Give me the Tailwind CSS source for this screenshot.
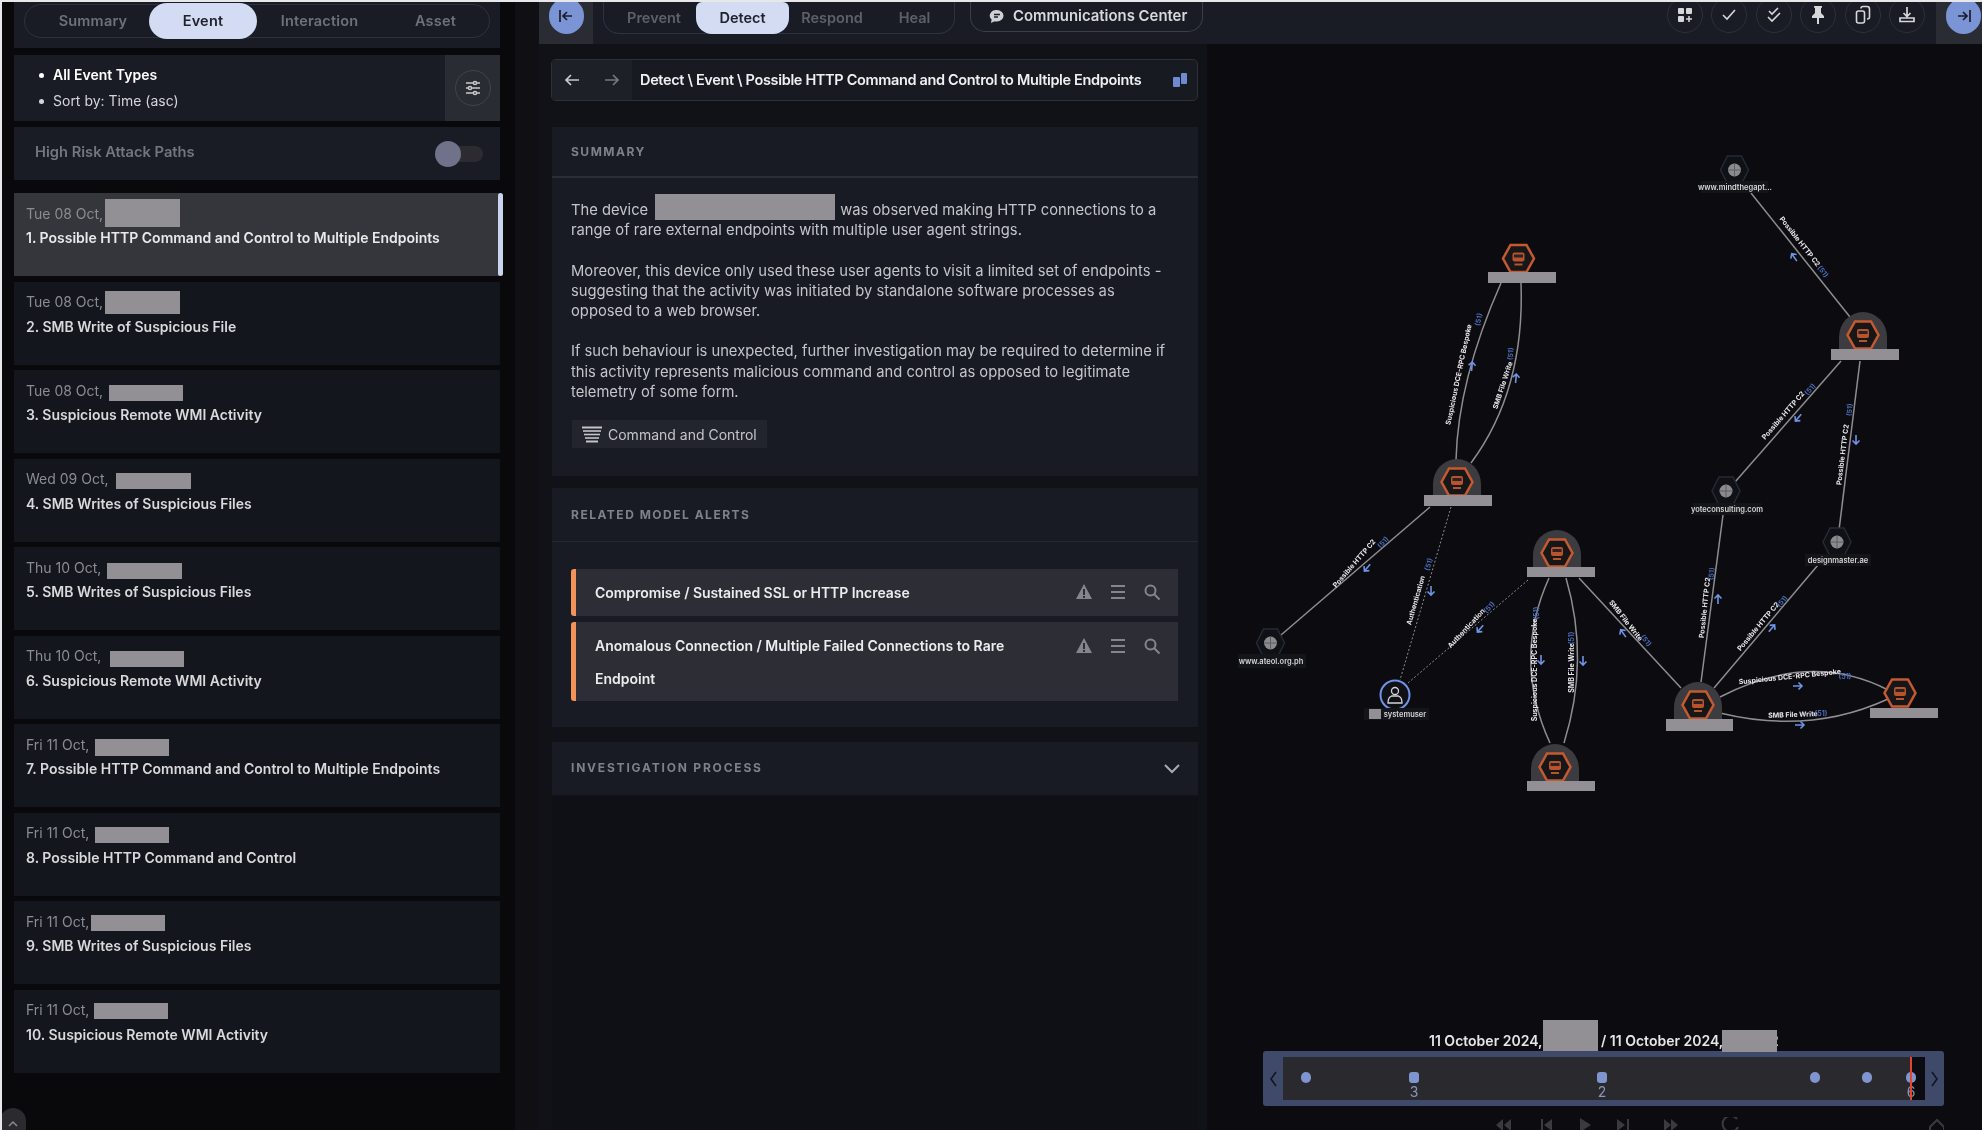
<!DOCTYPE html>
<html lang="en">
<head>
  <meta charset="UTF-8">
  <title>Detect - Event</title>
  <script src="https://cdn.jsdelivr.net/npm/@tailwindcss/browser@4"></script>
</head>
<body class="bg-[#e8e8ea] overflow-hidden">
<div class="flex w-[1980px] h-[1128px] ml-[2px] mt-[2px] overflow-hidden bg-[#09090c] text-white font-['Inter','Liberation_Sans',sans-serif] blur-[0.6px]">

  <!-- left event list -->
  <aside class="relative w-[513px] shrink-0 pl-[12px] pr-[15px] flex flex-col">
    <div class="h-[46px] bg-[#191c25] px-[10px] pt-[2px]">
      <div class="relative flex items-center h-[34px] rounded-full border border-[#2e3240] text-[14.500px] tracking-[0.2px] font-semibold text-[#6f7178]">
        <span class="w-[124px] pl-[12px] text-center">Summary</span>
        <span class="w-[108px] h-[36px] rounded-full bg-[#d3dcf2] text-[#20232c] flex items-center justify-center">Event</span>
        <span class="w-[125px] text-center">Interaction</span>
        <span class="w-[107px] text-center">Asset</span>
      </div>
    </div>
    <div class="mt-[7px] h-[66px] bg-[#191c25] flex">
      <ul class="flex-1 pl-[25px] pt-[7px] text-[14px] leading-[26px]">
        <li class="flex items-center gap-[9px] font-semibold"><span class="w-[5px] h-[5px] rounded-full bg-white"></span>All Event Types</li>
        <li class="flex items-center gap-[9px] text-[#d4d5d8]"><span class="w-[5px] h-[5px] rounded-full bg-[#d4d5d8]"></span>Sort by: Time (asc)</li>
      </ul>
      <div class="w-[55px] bg-[#2a2c33] flex items-center justify-center">
        <span class="w-[36px] h-[36px] rounded-full border border-[#41444d] flex items-center justify-center">
          <svg width="16" height="16" viewBox="0 0 16 16" fill="none" stroke="#c8c9cc" stroke-width="1.5"><path d="M1 3h14M1 8h14M1 13h14"/><circle cx="10" cy="3" r="1.6" fill="#2a2c33"/><circle cx="5" cy="8" r="1.6" fill="#2a2c33"/><circle cx="10" cy="13" r="1.6" fill="#2a2c33"/></svg>
        </span>
      </div>
    </div>
    <div class="mt-[6px] h-[53px] bg-[#191c25] flex items-center justify-between pl-[21px] pr-[17px]">
      <span class="-mt-[2px] text-[14.700px] font-semibold text-[#74767d]">High Risk Attack Paths</span>
      <span class="relative w-[47px] h-[16px] rounded-full bg-[#2b2b31]">
        <span class="absolute left-[-1px] top-[-5px] w-[26px] h-[26px] rounded-full bg-[#6f7288]"></span>
      </span>
    </div>

    <div class="mt-[13px] flex flex-col gap-[5.5px]">
      <div class="relative h-[83px] bg-[#35353c] pl-[12px] pt-[9px]">
        <div class="flex items-center h-[22px] text-[14px] text-[#8b8c91]">Tue 08 Oct,<span class="absolute left-[91px] top-[6px] w-[75px] h-[28px] bg-[#929094]"></span></div>
        <div class="mt-[3px] text-[14px] font-semibold text-[#e9e9eb]">1. Possible HTTP Command and Control to Multiple Endpoints</div>
        <span class="absolute right-[-3px] top-0 w-[5px] h-full rounded-sm bg-[#c9d4ef]"></span>
      </div>
      <div class="relative h-[83px] bg-[#14161d] pl-[12px] pt-[9px]">
        <div class="flex items-center h-[22px] text-[14px] text-[#8b8c91]">Tue 08 Oct,<span class="absolute left-[91px] top-[9px] w-[75px] h-[23px] bg-[#929094]"></span></div>
        <div class="mt-[3px] text-[14px] font-semibold text-[#d9d9dc]">2. SMB Write of Suspicious File</div>
      </div>
      <div class="relative h-[83px] bg-[#14161d] pl-[12px] pt-[9px]">
        <div class="flex items-center h-[22px] text-[14px] text-[#8b8c91]">Tue 08 Oct,<span class="absolute left-[95px] top-[15px] w-[74px] h-[16px] bg-[#929094]"></span></div>
        <div class="mt-[3px] text-[14px] font-semibold text-[#d9d9dc]">3. Suspicious Remote WMI Activity</div>
      </div>
      <div class="relative h-[83px] bg-[#14161d] pl-[12px] pt-[9px]">
        <div class="flex items-center h-[22px] text-[14px] text-[#8b8c91]">Wed 09 Oct,<span class="absolute left-[102px] top-[14px] w-[75px] h-[16px] bg-[#929094]"></span></div>
        <div class="mt-[3px] text-[14px] font-semibold text-[#d9d9dc]">4. SMB Writes of Suspicious Files</div>
      </div>
      <div class="relative h-[83px] bg-[#14161d] pl-[12px] pt-[9px]">
        <div class="flex items-center h-[22px] text-[14px] text-[#8b8c91]">Thu 10 Oct,<span class="absolute left-[93px] top-[16px] w-[75px] h-[16px] bg-[#929094]"></span></div>
        <div class="mt-[3px] text-[14px] font-semibold text-[#d9d9dc]">5. SMB Writes of Suspicious Files</div>
      </div>
      <div class="relative h-[83px] bg-[#14161d] pl-[12px] pt-[9px]">
        <div class="flex items-center h-[22px] text-[14px] text-[#8b8c91]">Thu 10 Oct,<span class="absolute left-[96px] top-[15px] w-[74px] h-[16px] bg-[#929094]"></span></div>
        <div class="mt-[3px] text-[14px] font-semibold text-[#d9d9dc]">6. Suspicious Remote WMI Activity</div>
      </div>
      <div class="relative h-[83px] bg-[#14161d] pl-[12px] pt-[9px]">
        <div class="flex items-center h-[22px] text-[14px] text-[#8b8c91]">Fri 11 Oct,<span class="absolute left-[81px] top-[15px] w-[74px] h-[17px] bg-[#929094]"></span></div>
        <div class="mt-[3px] text-[14px] font-semibold text-[#d9d9dc]">7. Possible HTTP Command and Control to Multiple Endpoints</div>
      </div>
      <div class="relative h-[83px] bg-[#14161d] pl-[12px] pt-[9px]">
        <div class="flex items-center h-[22px] text-[14px] text-[#8b8c91]">Fri 11 Oct,<span class="absolute left-[81px] top-[14px] w-[74px] h-[16px] bg-[#929094]"></span></div>
        <div class="mt-[3px] text-[14px] font-semibold text-[#d9d9dc]">8. Possible HTTP Command and Control</div>
      </div>
      <div class="relative h-[83px] bg-[#14161d] pl-[12px] pt-[9px]">
        <div class="flex items-center h-[22px] text-[14px] text-[#8b8c91]">Fri 11 Oct,<span class="absolute left-[77px] top-[14px] w-[74px] h-[16px] bg-[#929094]"></span></div>
        <div class="mt-[3px] text-[14px] font-semibold text-[#d9d9dc]">9. SMB Writes of Suspicious Files</div>
      </div>
      <div class="relative h-[83px] bg-[#14161d] pl-[12px] pt-[9px]">
        <div class="flex items-center h-[22px] text-[14px] text-[#8b8c91]">Fri 11 Oct,<span class="absolute left-[80px] top-[13px] w-[74px] h-[16px] bg-[#929094]"></span></div>
        <div class="mt-[3px] text-[14px] font-semibold text-[#d9d9dc]">10. Suspicious Remote WMI Activity</div>
      </div>
    </div>

    <span class="absolute left-[-2px] top-[1106px] w-[26px] h-[30px] rounded-t-full bg-[#2a2a2f] flex justify-center pt-[12px]">
      <svg width="12" height="8" viewBox="0 0 12 8" fill="none" stroke="#8a8b90" stroke-width="1.5"><path d="M2 6l4-4 4 4"/></svg>
    </span>
  </aside>

  <div class="w-[24px] shrink-0 bg-[#101014]"></div>

  <div class="flex-1 flex flex-col min-w-0">
    <!-- top bar -->
    <header class="h-[42px] shrink-0 bg-[#191c25] flex relative">
      <div class="w-[54px] bg-[#2a2c33] flex justify-center overflow-hidden">
        <span class="w-[35px] h-[36px] -mt-[4px] rounded-full bg-[#7a94d6] flex items-center justify-center">
          <svg width="16" height="14" viewBox="0 0 16 14" fill="none" stroke="#1a1d26" stroke-width="1.7"><path d="M2 1v12M14 7H5M9 3L5 7l4 4"/></svg>
        </span>
      </div>
      <nav class="ml-[10px] w-[352px] h-[32px] rounded-b-[16px] border border-t-0 border-[#2e3240] flex items-center text-[14.500px] font-semibold text-[#5e6067]">
        <span class="w-[92px] pl-[8px] text-center">Prevent</span>
        <span class="w-[93px] h-[32px] rounded-b-[16px] rounded-t-[6px] bg-[#d3dcf2] text-[#20232c] flex items-center justify-center">Detect</span>
        <span class="w-[86px] text-center">Respond</span>
        <span class="w-[68px] pl-[11px] text-center">Heal</span>
      </nav>
      <div class="ml-[15px] w-[233px] h-[30px] rounded-b-[15px] border border-t-0 border-[#3a3e4b] flex items-center pl-[18px] gap-[8px] text-[14.900px] font-semibold text-[#d8d9dc]">
        <svg width="16" height="15" viewBox="0 0 16 15"><path d="M8 1a6.5 5.7 0 0 1 0 11.400H5L2 14l.6-3.400A6.500 5.700 0 0 1 8 1z" fill="#cfd0d4"/><path d="M5 5.500h6M5 8h4" stroke="#191c25" stroke-width="1.300"/></svg>
        Communications Center
      </div>
      <div class="absolute right-[57px] top-[-5px] flex gap-[8.400px]">
        <span class="w-[36px] h-[36px] rounded-full border border-[#2c303c] flex items-center justify-center">
          <svg width="16" height="16" viewBox="0 0 16 16" fill="#d6d7da"><rect x="1" y="1" width="6" height="6" rx="1"/><rect x="9" y="1" width="6" height="6" rx="1"/><rect x="1" y="9" width="6" height="6" rx="1"/><path d="M12 9v6M9 12h6" stroke="#d6d7da" stroke-width="1.500"/></svg>
        </span>
        <span class="w-[36px] h-[36px] rounded-full border border-[#2c303c] flex items-center justify-center">
          <svg width="16" height="14" viewBox="0 0 16 14" fill="none" stroke="#d6d7da" stroke-width="1.600"><path d="M2 7l4 4 8-9"/></svg>
        </span>
        <span class="w-[36px] h-[36px] rounded-full border border-[#2c303c] flex items-center justify-center">
          <svg width="16" height="18" viewBox="0 0 16 18" fill="none" stroke="#d6d7da" stroke-width="1.600"><path d="M3 5l3 3 6-6M2 11l4 4 8-8"/></svg>
        </span>
        <span class="w-[36px] h-[36px] rounded-full border border-[#2c303c] flex items-center justify-center">
          <svg width="14" height="20" viewBox="0 0 14 20" fill="#d6d7da"><path d="M3 1h8v1.500L10 3v5l3 3v2H1v-2l3-3V3L3 2.500zM6 13h2v6H6z"/></svg>
        </span>
        <span class="w-[36px] h-[36px] rounded-full border border-[#2c303c] flex items-center justify-center">
          <svg width="16" height="20" viewBox="0 0 16 20" fill="none" stroke="#d6d7da" stroke-width="1.600"><rect x="1.500" y="6" width="8" height="12" rx="2"/><path d="M6 3.500Q6 1.500 8 1.500h4q2.500 0 2.500 2.500v8q0 2-2.500 2"/></svg>
        </span>
        <span class="w-[36px] h-[36px] rounded-full border border-[#2c303c] flex items-center justify-center">
          <svg width="18" height="18" viewBox="0 0 18 18" fill="none" stroke="#d6d7da" stroke-width="1.700"><path d="M9 1v9M5.500 7L9 10.500 12.500 7M2 12v3.500h14V12z"/></svg>
        </span>
      </div>
      <div class="absolute right-0 top-0 w-[46px] h-[42px] bg-[#2a2c33] flex justify-end pr-[1px] overflow-hidden">
        <span class="w-[35px] h-[36px] -mt-[4px] rounded-full bg-[#7a94d6] flex items-center justify-center">
          <svg width="16" height="14" viewBox="0 0 16 14" fill="none" stroke="#1a1d26" stroke-width="1.700"><path d="M14 1v12M2 7h9M7 3l4 4-4 4"/></svg>
        </span>
      </div>
    </header>

    <div class="flex-1 flex min-h-0">
      <!-- detail column -->
      <section class="w-[668px] shrink-0 bg-[#111218] flex flex-col pl-[13px] pr-[9px]">
        <div class="mt-[15px] -ml-[1px] h-[42px] rounded-[5px] border border-[#2e3038] bg-[#181a22] flex items-center">
          <span class="w-[40px] h-full bg-[#1e2028] flex items-center justify-center">
            <svg width="16" height="14" viewBox="0 0 16 14" fill="none" stroke="#c8c9cd" stroke-width="1.700"><path d="M15 7H2M7 2L2 7l5 5"/></svg>
          </span>
          <span class="w-[40px] h-full bg-[#1e2028] flex items-center justify-center">
            <svg width="16" height="14" viewBox="0 0 16 14" fill="none" stroke="#75777d" stroke-width="1.700"><path d="M1 7h13M9 2l5 5-5 5"/></svg>
          </span>
          <span class="ml-[8px] text-[14.500px] font-semibold text-[#f0f0f2] whitespace-nowrap tracking-[-0.34px]">Detect \ Event \ Possible HTTP Command and Control to Multiple Endpoints</span>
          <svg class="ml-auto mr-[9px]" width="16" height="16" viewBox="0 0 16 16" fill="#6f8bcf"><rect x="1" y="5" width="7" height="10" rx="1"/><rect x="9" y="1" width="6" height="11" rx="1"/></svg>
        </div>

        <div class="mt-[26px] h-[349px] bg-[#181b24]">
          <div class="h-[51px] border-b-2 border-[#2a2d36] flex items-center pl-[19px] text-[12px] font-bold tracking-[1.500px] text-[#7f8188]">SUMMARY</div>
          <div class="pl-[19px] pt-[22px] text-[14.750px] leading-[20.300px] text-[#c4c5c9] whitespace-nowrap">
            <p class="relative">The device<span class="absolute left-[84px] top-[-6px] w-[180px] h-[26px] bg-[#929094]"></span><span class="ml-[192px]">was observed making HTTP connections to a</span><br>range of rare external endpoints with multiple user agent strings.</p>
            <p class="mt-[20px]">Moreover, this device only used these user agents to visit a limited set of endpoints -<br>suggesting that the activity was initiated by standalone software processes as<br>opposed to a web browser.</p>
            <p class="mt-[20px]">If such behaviour is unexpected, further investigation may be required to determine if<br>this activity represents malicious command and control as opposed to legitimate<br>telemetry of some form.</p>
          </div>
          <div class="ml-[20px] mt-[18px] w-[195px] h-[28px] bg-[#22252d] flex items-center pl-[10px] gap-[6px] text-[14px] text-[#c4c5c9]">
            <svg width="20" height="17" viewBox="0 0 20 17" fill="none" stroke="#c4c5c9"><path d="M0 1.500h20" stroke-width="2"/><path d="M1 5h18" stroke-width="1.600"/><path d="M2 8.500h16" stroke-width="1.600"/><path d="M3 12h14" stroke-width="1.600"/><path d="M4 15.500h12" stroke-width="2"/></svg>
            Command and Control
          </div>
        </div>

        <div class="mt-[12px] h-[239px] bg-[#181b24]">
          <div class="h-[54px] border-b border-[#252832] flex items-center pl-[19px] text-[12px] font-bold tracking-[1.500px] text-[#7f8188]">RELATED MODEL ALERTS</div>
          <div class="mt-[27px] ml-[19px] mr-[20px] flex flex-col gap-[6px]">
            <div class="relative h-[47px] bg-[#2d2d35] border-l-[5px] border-[#f2945a] rounded-l-[3px] flex items-center pl-[19px] text-[14px] tracking-[-0.05px] font-semibold text-[#ececee]">
              Compromise / Sustained SSL or HTTP Increase
              <div class="absolute right-[17px] top-[14px] flex gap-[16px]">
                <svg width="18" height="18" viewBox="0 0 18 18" fill="#85868c"><path d="M9 1l8 15H1zM8 6v6h2V6zM8 13v2h2v-2z" fill-rule="evenodd"/></svg>
                <svg width="18" height="18" viewBox="0 0 18 18" fill="none" stroke="#85868c" stroke-width="1.800"><path d="M2 3h14M2 9h14M2 15h14"/></svg>
                <svg width="18" height="18" viewBox="0 0 18 18" fill="none" stroke="#85868c" stroke-width="2"><circle cx="7.500" cy="7.500" r="5"/><path d="M11 11l5.500 5.500"/></svg>
              </div>
            </div>
            <div class="relative h-[79px] bg-[#2d2d35] border-l-[5px] border-[#f2945a] rounded-l-[3px] pl-[19px] pt-[7px] text-[14px] leading-[33px] font-semibold text-[#ececee]">
              Anomalous Connection / Multiple Failed Connections to Rare<br>Endpoint
              <div class="absolute right-[17px] top-[15px] flex gap-[16px]">
                <svg width="18" height="18" viewBox="0 0 18 18" fill="#85868c"><path d="M9 1l8 15H1zM8 6v6h2V6zM8 13v2h2v-2z" fill-rule="evenodd"/></svg>
                <svg width="18" height="18" viewBox="0 0 18 18" fill="none" stroke="#85868c" stroke-width="1.800"><path d="M2 3h14M2 9h14M2 15h14"/></svg>
                <svg width="18" height="18" viewBox="0 0 18 18" fill="none" stroke="#85868c" stroke-width="2"><circle cx="7.500" cy="7.500" r="5"/><path d="M11 11l5.500 5.500"/></svg>
              </div>
            </div>
          </div>
        </div>

        <div class="mt-[15px] h-[53px] bg-[#181b24] flex items-center justify-between pl-[19px] pr-[17px]">
          <span class="-mt-[2px] text-[12px] font-bold tracking-[1.800px] text-[#7f8188]">INVESTIGATION PROCESS</span>
          <svg width="18" height="11" viewBox="0 0 18 11" fill="none" stroke="#a9abb0" stroke-width="2"><path d="M2 2l7 7 7-7"/></svg>
        </div>
        <div class="flex-1 mt-[2px] bg-[#0f1015]"></div>
      </section>

      <!-- graph canvas -->
      <main class="relative flex-1 bg-[#0c0c10] flex flex-col justify-end min-w-0 overflow-hidden">
        <svg class="absolute inset-0" width="773" height="1086" viewBox="1207 44 773 1086" fill="none">
          <defs>
            <g id="hex">
              <path d="M-8-13.500H8L15.500 0 8 13.500H-8L-15.500 0Z" fill="#17171a" stroke="#c5592f" stroke-width="2.500"/>
              <rect x="-6" y="-6" width="12" height="9" rx="2" fill="#b9532c"/>
              <rect x="-4.500" y="-4" width="9" height="3" fill="#2a2224"/>
              <path d="M-4 6h8" stroke="#b9532c" stroke-width="2"/>
            </g>
            <g id="globe">
              <path d="M-7-14H7L14 0 7 14H-7L-14 0Z" fill="#101116" stroke="#262a36" stroke-width="1.500"/>
              <circle r="6.500" fill="#8b8b8f"/>
              <path d="M-6.500 0h13M0-6.500v13" stroke="#5f5f63" stroke-width="1"/>
            </g>
            <path id="arrow" d="M0 5V-4M-3.500-.5L0-4 3.500-.5" stroke="#6f93e6" stroke-width="1.600"/>
          </defs>

          <g stroke="#8e8e92" stroke-width="1.500">
            <path d="M1501 283Q1458 380 1456 460"/>
            <path d="M1521 283Q1525 390 1471 463"/>
            <path d="M1751 193L1850 317"/>
            <path d="M1841 361L1735 482"/>
            <path d="M1860 361L1839 530"/>
            <path d="M1430 507L1281 635"/>
            <path d="M1549 578Q1512 660 1550 743"/>
            <path d="M1566 578Q1590 660 1564 743"/>
            <path d="M1579 578L1681 688"/>
            <path d="M1701 682L1723 515"/>
            <path d="M1714 688L1818 565"/>
            <path d="M1720 697Q1810 650 1888 690"/>
            <path d="M1720 713Q1810 735 1888 699"/>
            <path d="M1451 507L1400 680" stroke-dasharray="2 2" stroke-width="1"/>
            <path d="M1528 580L1408 683" stroke-dasharray="2 2" stroke-width="1"/>
          </g>

          <!-- halos -->
          <g fill="#3b3b40">
            <path d="M1839 349V337a24 25 0 0 1 48 0V349Z"/>
            <path d="M1433 495V484a24 25 0 0 1 48 0V495Z"/>
            <path d="M1533 567V555a24 25 0 0 1 48 0V567Z"/>
            <path d="M1531 781V769a24 25 0 0 1 48 0V781Z"/>
            <path d="M1674 719V707a24 25 0 0 1 48 0V719Z"/>
          </g>
          <use href="#hex" x="1518.500" y="258.500"/>
          <use href="#hex" x="1863" y="335"/>
          <use href="#hex" x="1457" y="482"/>
          <use href="#hex" x="1557" y="553"/>
          <use href="#hex" x="1555" y="767"/>
          <use href="#hex" x="1698" y="705"/>
          <use href="#hex" x="1900" y="693"/>
          <use href="#globe" x="1734.500" y="170"/>
          <use href="#globe" x="1270.500" y="643"/>
          <use href="#globe" x="1726" y="491"/>
          <use href="#globe" x="1837" y="542"/>

          <circle cx="1395" cy="695" r="14.500" fill="#101116" stroke="#6f93e6" stroke-width="2"/>
          <circle cx="1395" cy="691" r="3.500" stroke="#d4d5d8" stroke-width="1.300"/>
          <path d="M1388 703q0-6 3.500-7h7q3.500 1 3.500 7z" stroke="#d4d5d8" stroke-width="1.300"/>

          <!-- redacted names -->
          <g fill="#929094">
            <rect x="1488" y="272" width="68" height="11"/>
            <rect x="1831" y="349" width="68" height="11"/>
            <rect x="1424" y="495" width="68" height="11"/>
            <rect x="1527" y="567" width="68" height="10"/>
            <rect x="1527" y="781" width="68" height="10"/>
            <rect x="1666" y="719" width="67" height="12"/>
            <rect x="1870" y="708" width="68" height="10"/>
          </g>

          <!-- node names -->
          <g font-size="7.500" font-weight="600" fill="#d6d6d9" text-anchor="middle">
            <rect x="1701" y="181" width="67" height="12" fill="#141519"/>
            <text x="1735" y="190">www.mindthegapt...</text>
            <rect x="1238" y="654" width="68" height="14" fill="#141519"/>
            <text x="1271" y="664">www.ateol.org.ph</text>
            <rect x="1693" y="503" width="68" height="12" fill="#141519"/>
            <text x="1727" y="512">yoteconsulting.com</text>
            <rect x="1805" y="554" width="66" height="12" fill="#141519"/>
            <text x="1838" y="563">designmaster.ae</text>
            <rect x="1364" y="708" width="65" height="12" fill="#141519"/>
            <text x="1405" y="717">systemuser</text>
            <rect x="1369" y="709" width="12" height="10" fill="#929094"/>
          </g>

          <!-- edge labels -->
          <g font-size="7" font-weight="700" fill="#e6e6e8" text-anchor="middle">
            <text transform="translate(1461 375) rotate(-78)">Suspicious DCE-RPC Bespoke</text>
            <text transform="translate(1505 386) rotate(-72)">SMB File Write</text>
            <text transform="translate(1798 243) rotate(52)">Possible HTTP C2</text>
            <text transform="translate(1785 417) rotate(-49)">Possible HTTP C2</text>
            <text transform="translate(1845 455) rotate(-83)">Possible HTTP C2</text>
            <text transform="translate(1356 565) rotate(-49)">Possible HTTP C2</text>
            <text transform="translate(1418 601) rotate(-74)">Authentication</text>
            <text transform="translate(1468 630) rotate(-47)">Authentication</text>
            <text transform="translate(1537 670) rotate(-90)">Suspicious DCE-RPC Bespoke</text>
            <text transform="translate(1574 668) rotate(-90)">SMB File Write</text>
            <text transform="translate(1624 622) rotate(52)">SMB File Write</text>
            <text transform="translate(1707 608) rotate(-84)">Possible HTTP C2</text>
            <text transform="translate(1760 628) rotate(-50)">Possible HTTP C2</text>
            <text transform="translate(1790 679) rotate(-6)">Suspicious DCE-RPC Bespoke</text>
            <text transform="translate(1793 717) rotate(-2)">SMB File Write</text>
          </g>
          <g font-size="7" font-weight="700" fill="#4a6db8" text-anchor="middle">
            <text transform="translate(1481 320) rotate(-78)">(51)</text>
            <text transform="translate(1513 354) rotate(-85)">(51)</text>
            <text transform="translate(1821 273) rotate(52)">(51)</text>
            <text transform="translate(1812 391) rotate(-49)">(51)</text>
            <text transform="translate(1852 410) rotate(-85)">(51)</text>
            <text transform="translate(1385 544) rotate(-49)">(51)</text>
            <text transform="translate(1431 565) rotate(-74)">(51)</text>
            <text transform="translate(1491 609) rotate(-47)">(51)</text>
            <text transform="translate(1539 613) rotate(-90)">(51)</text>
            <text transform="translate(1574 638) rotate(-90)">(51)</text>
            <text transform="translate(1644 642) rotate(52)">(51)</text>
            <text transform="translate(1714 574) rotate(-84)">(51)</text>
            <text transform="translate(1784 603) rotate(-50)">(51)</text>
            <text x="1845" y="679">(51)</text>
            <text x="1821" y="716">(51)</text>
          </g>
          <g>
            <use href="#arrow" transform="translate(1472 366) rotate(5)"/>
            <use href="#arrow" transform="translate(1516 378) rotate(5)"/>
            <use href="#arrow" transform="translate(1794 257) rotate(-35)"/>
            <use href="#arrow" transform="translate(1798 418) rotate(220)"/>
            <use href="#arrow" transform="translate(1856 440) rotate(180)"/>
            <use href="#arrow" transform="translate(1367 568) rotate(220)"/>
            <use href="#arrow" transform="translate(1431 591) rotate(180)"/>
            <use href="#arrow" transform="translate(1480 629) rotate(220)"/>
            <use href="#arrow" transform="translate(1541 660) rotate(180)"/>
            <use href="#arrow" transform="translate(1583 661) rotate(180)"/>
            <use href="#arrow" transform="translate(1623 633) rotate(-35)"/>
            <use href="#arrow" transform="translate(1718 599)"/>
            <use href="#arrow" transform="translate(1772 628) rotate(40)"/>
            <use href="#arrow" transform="translate(1798 686) rotate(90)"/>
            <use href="#arrow" transform="translate(1800 725) rotate(90)"/>
          </g>
        </svg>

        <!-- timeline -->
        <div class="relative w-[681px] ml-[56px]">
          <div class="relative h-[32px] text-[14px] font-semibold text-[#e6e6e8] whitespace-nowrap">
            <span class="absolute left-[166px] top-[11px]">11 October 2024,</span>
            <span class="absolute left-[280px] top-[1px] w-[55px] h-[31px] bg-[#929094]"></span>
            <span class="absolute left-[338px] top-[11px]">/ 11 October 2024,</span>
            <span class="absolute left-[507px] top-[11px]">2</span>
            <span class="absolute left-[459px] top-[11px] w-[55px] h-[22px] bg-[#929094]"></span>
          </div>
          <div class="h-[55px] rounded-[3px] bg-[#3f4a6b] flex items-center">
            <span class="w-[20px] flex justify-center">
              <svg width="9" height="18" viewBox="0 0 9 18" fill="none" stroke="#14161d" stroke-width="1.600"><path d="M7 2L2 9l5 7"/></svg>
            </span>
            <div class="relative w-[642px] h-[43px] bg-[#2a2a2e] text-[14px] text-[#8a96b8]">
              <span class="absolute right-0 top-0 w-[13px] h-full bg-[#0c0c10]"></span>
              <span class="absolute left-[18px] top-[15px] w-[10px] h-[11px] rounded-full bg-[#7f95cf]"></span>
              <span class="absolute left-[126px] top-[15px] w-[10px] h-[11px] rounded-[3px] bg-[#7f95cf]"></span>
              <span class="absolute left-[126px] top-[26px] w-[10px] text-center leading-[18px]">3</span>
              <span class="absolute left-[314px] top-[15px] w-[10px] h-[11px] rounded-[3px] bg-[#7f95cf]"></span>
              <span class="absolute left-[314px] top-[26px] w-[10px] text-center leading-[18px]">2</span>
              <span class="absolute left-[527px] top-[15px] w-[10px] h-[11px] rounded-full bg-[#7f95cf]"></span>
              <span class="absolute left-[579px] top-[15px] w-[10px] h-[11px] rounded-full bg-[#7f95cf]"></span>
              <span class="absolute left-[623px] top-[15px] w-[10px] h-[11px] rounded-full bg-[#7f95cf]"></span>
              <span class="absolute left-[623px] top-[26px] w-[10px] text-center leading-[18px]">6</span>
              <span class="absolute left-[627px] top-0 w-[2px] h-full bg-[#e5452e]"></span>
            </div>
            <span class="w-[19px] flex justify-center">
              <svg width="9" height="18" viewBox="0 0 9 18" fill="none" stroke="#14161d" stroke-width="1.600"><path d="M2 2l5 7-5 7"/></svg>
            </span>
          </div>
          <div class="relative h-[24px]">
            <svg class="absolute left-0 top-[11px]" width="681" height="18" viewBox="1263 1118 681 18" fill="#3a3a3f">
              <path d="M1503 1120v12l-7-6zM1511 1120v12l-7-6z"/>
              <path d="M1541 1120v12h2v-12zM1552 1120v12l-8-6z"/>
              <path d="M1580 1119v14l11-7z"/>
              <path d="M1617 1120v12l8-6zM1627 1120v12h2v-12z"/>
              <path d="M1664 1120v12l7-6zM1671 1120v12l7-6z"/>
              <path d="M1737 1120a8 8 0 1 0 1 8" fill="none" stroke="#3a3a3f" stroke-width="2"/>
              <path d="M1930 1128l7-7 7 7v8h-14z" fill="none" stroke="#3a3a3f" stroke-width="2"/>
            </svg>
          </div>
        </div>
      </main>
    </div>
  </div>
</div>
</body>
</html>
